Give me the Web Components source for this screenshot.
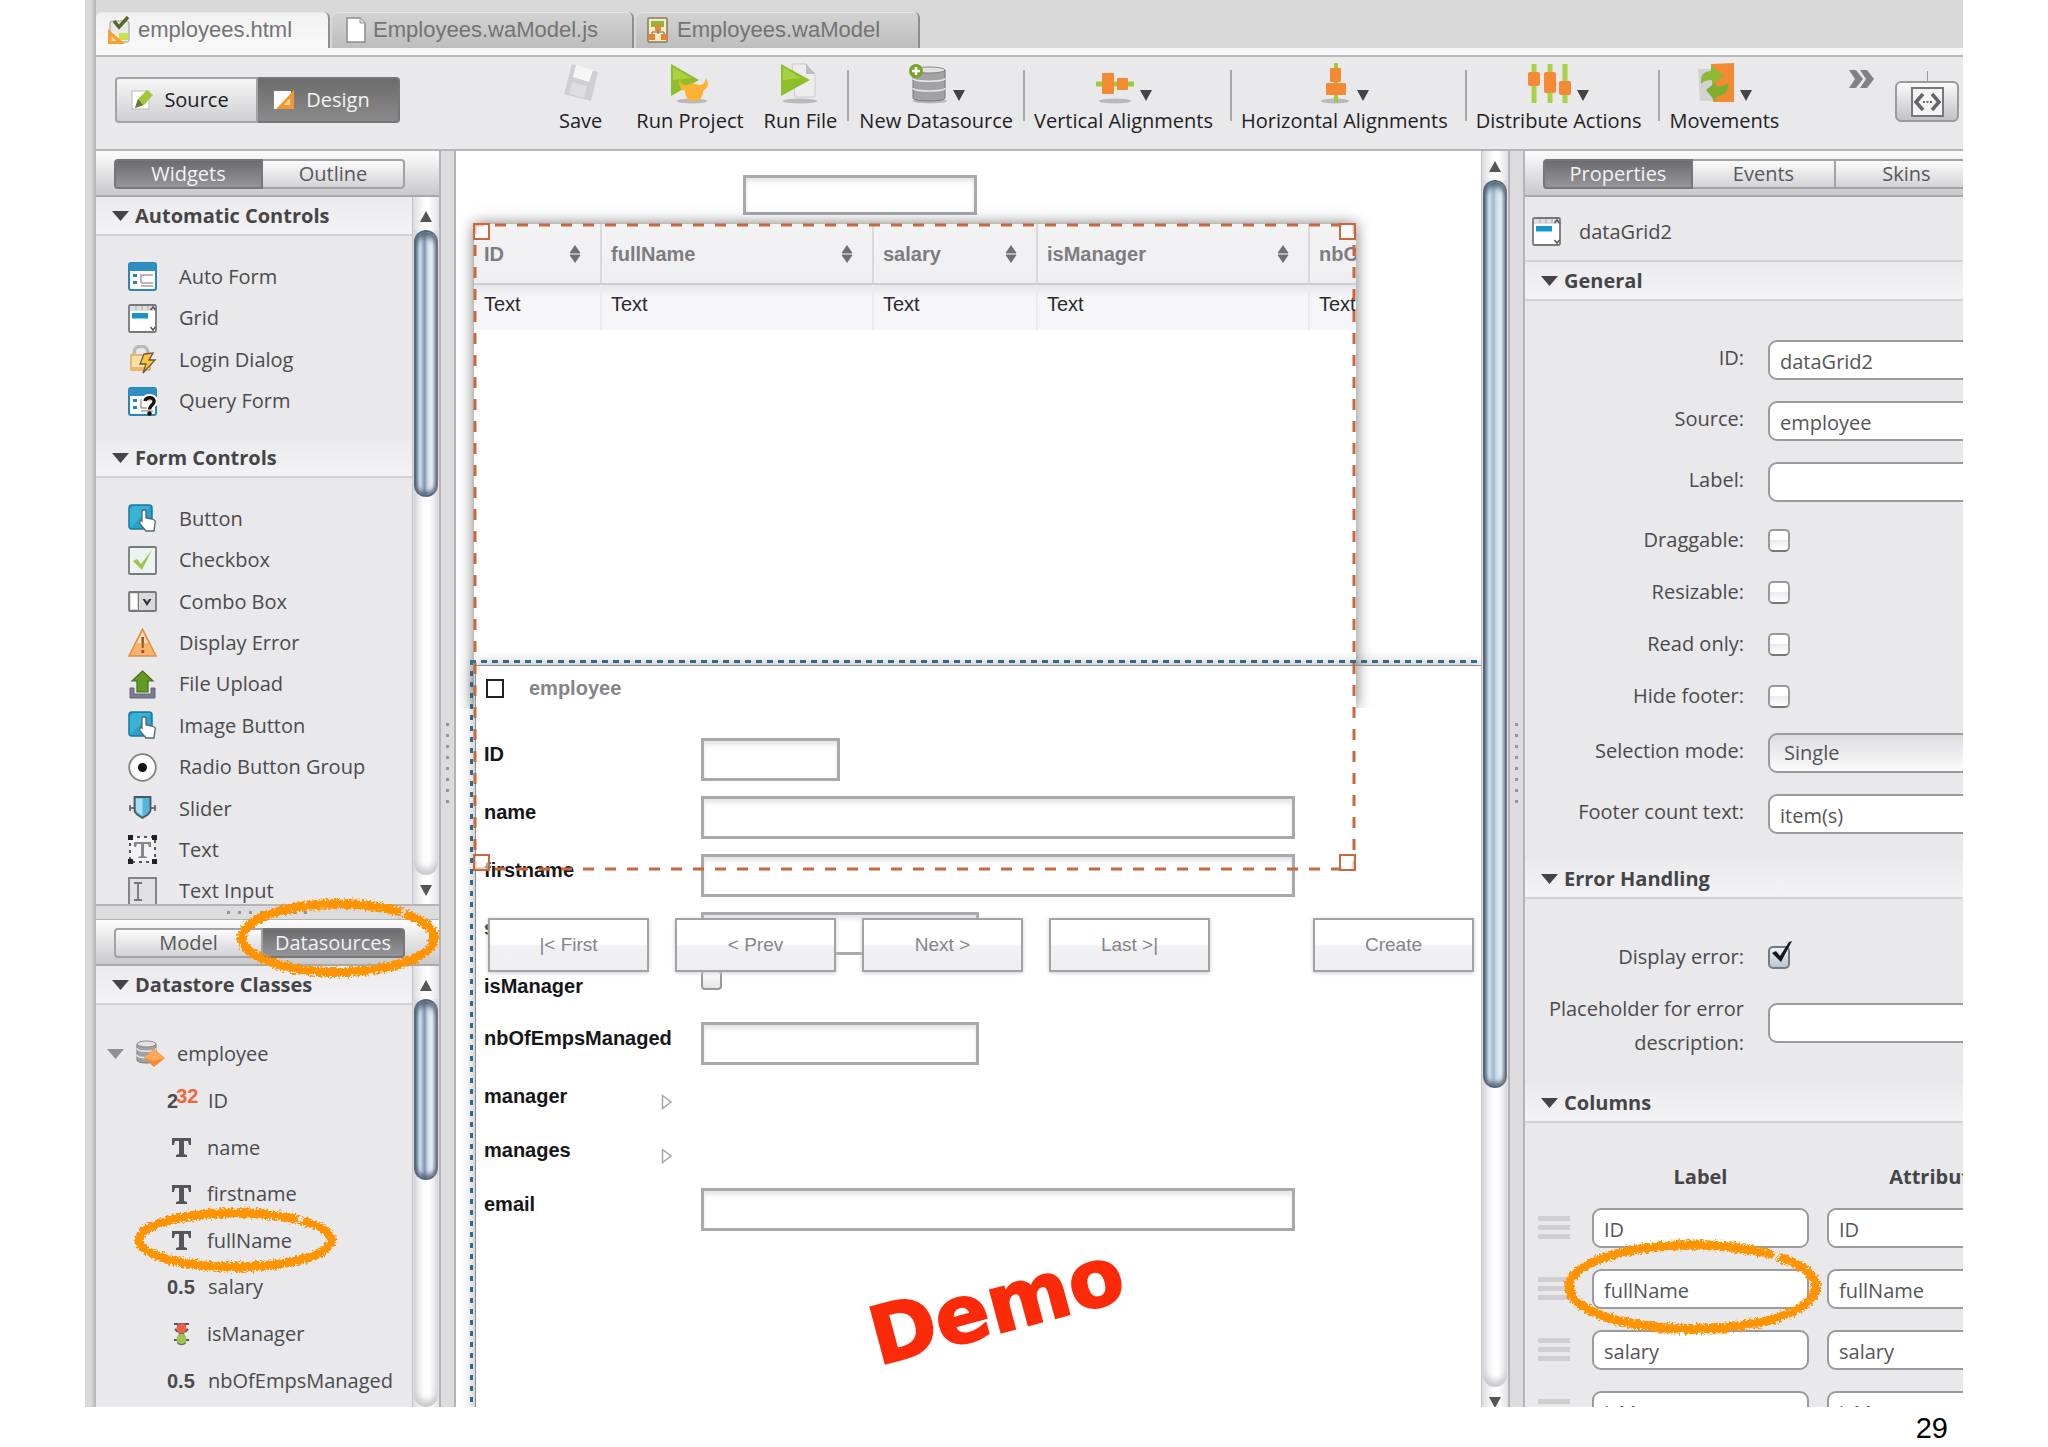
<!DOCTYPE html>
<html lang="en">
<head>
<meta charset="utf-8">
<title>employees.html - Designer</title>
<style>
html,body{margin:0;height:100%;background:#fff}
body{font:20px/26px "Open Sans","Noto Sans",sans-serif;color:#4b4b4e;overflow:hidden}
</style>
</head>
<body>
<slide-page></slide-page>
<script>
const RESET = '*{box-sizing:border-box}button,input,select{font:inherit;color:inherit;margin:0}ul{list-style:none;margin:0;padding:0}';
function define(tag, css, html, setup) {
  customElements.define(tag, class extends HTMLElement {
    constructor() { super(); this.attachShadow({ mode: 'open' }); }
    connectedCallback() {
      if (this.shadowRoot.firstChild) return;
      const body = typeof html === 'function' ? html(this) : html;
      this.shadowRoot.innerHTML = '<style>' + RESET + css + '</style>' + body;
      if (setup) setup(this, this.shadowRoot);
    }
  });
}

const form = '<rect x="1" y="1" width="27" height="27" rx="2" fill="#fff" stroke="#2a86b8" stroke-width="2"/><rect x="1" y="1" width="27" height="8" fill="#2f8fc0"/><path d="M5 12h4v3H5zM5 19h4v3H5z" fill="#2385b5"/><path d="M13 21v-8h12M13 21h12M13 24h12" fill="none" stroke="#b09a9c" stroke-width="1.5"/>';
const press = '<rect x="1" y="1" width="23" height="24" rx="3" fill="#25a3cb" stroke="#17799c" stroke-width="1.5"/><path d="M2 24V5l4-3h17z" fill="#4dbde0" opacity=".55"/><path d="M14 17V8c0-3 4-3 4 0v6l6 1c3 1 4 2 3 4l-1 8h-8l-6-7c-1-3 1-4 2-3z" fill="#fff" stroke="#56646e" stroke-width="1.300"/>';
const db = (x, y, w, h) => `<path d="M${x} ${y + 3}v${h - 6}c0 4 ${w} 4 ${w} 0v-${h - 6}z" fill="#a2a2a4" stroke="#77777a"/><ellipse cx="${x + w / 2}" cy="${y + 3}" rx="${w / 2}" ry="3" fill="#e2e2e4" stroke="#88888b"/><path d="M${x} ${y + h / 3}c0 4 ${w} 4 ${w} 0M${x} ${y + h * .62}c0 4 ${w} 4 ${w} 0" fill="none" stroke="#e8e8ea" stroke-width="1.500"/>`;
const shade = (x, w) => `<ellipse cx="${x}" cy="38" rx="${w}" ry="2.500" fill="#b9b9bd"/>`;
const ICONS = {
  form: [29, 29, form],
  grid: [29, 29, '<rect x="1" y="1" width="27" height="27" rx="1.500" fill="#fff" stroke="#77787c" stroke-width="1.800"/><path d="M2 2h25v5H2z" fill="#dededf"/><path d="M8 2v4M14 2v4M20 2v4" stroke="#aaa"/><path d="M4 9h16v5.500H4z" fill="#1496c6"/><path d="M22.500 6l2.500-3 2.500 3M22.500 23l2.500 3 2.500-3" fill="none" stroke="#555" stroke-width="1.500"/>'],
  login: [29, 29, '<path d="M6 12V8c0-9 14-9 14 0v4" fill="none" stroke="#b9b9bc" stroke-width="3.500"/><rect x="3" y="10" width="19" height="15" fill="#f8dfa6" stroke="#dba960" stroke-width="1.500"/><path d="M3 22h15v4H3z" fill="#f0b562"/><path d="M16 9l9-1-4 7h6L15 28l3-9h-6z" fill="#ffc53c" stroke="#6a5940" stroke-width="1.300"/>'],
  query: [29, 29, form + '<path d="M16 14c1-6 12-5 11 1-.5 3.500-5 3-5.500 8" fill="none" stroke="#fff" stroke-width="6"/><path d="M17 14c1-5 10-4 9 1-.5 3.500-4.500 3-4.500 7.500" fill="none" stroke="#111" stroke-width="3.400"/><circle cx="21.500" cy="26.500" r="2.200" fill="#111"/>'],
  press: [29, 29, press],
  check: [29, 29, '<rect x="1" y="1" width="27" height="27" rx="1" fill="#edf3ee" stroke="#77797d" stroke-width="1.800"/><path d="M5 15l4-2 4 5 11-14-10 20z" fill="#9cc552"/>'],
  combo: [29, 29, '<rect x="1" y="5" width="27" height="19" rx="1" fill="#d9d9db" stroke="#77797d" stroke-width="1.800"/><path d="M3 7h6v15H3z" fill="#fff"/><path d="M10.500 6v17" stroke="#77797d"/><path d="M14.500 12h2.500l2 3 2-3h2.500L19 19z" fill="#333"/>'],
  warn: [29, 29, '<path d="M14.500 1L28 28H1z" fill="#f6b36d" stroke="#e18e45" stroke-width="1.500"/><path d="M14.500 4L9 15h11z" fill="#fde4c8"/><path d="M13.300 9h2.800l-.5 11h-1.800z" fill="#a8501f"/><circle cx="14.700" cy="23.500" r="1.700" fill="#a8501f"/>'],
  upload: [29, 29, '<path d="M2 18v10h25V18h-4v6H6v-6z" fill="#7c7c90" stroke="#66667a"/><path d="M14.500 1L25 11h-5v11H9V11H4z" fill="#629a22" stroke="#44701a" stroke-width="1.200"/>'],
  radio: [29, 29, '<circle cx="14.500" cy="14.500" r="13.300" fill="#fff" stroke="#808285" stroke-width="1.800"/><circle cx="14.500" cy="14.500" r="4.500" fill="#111"/>'],
  slider: [29, 29, '<path d="M1 14h27M2 11v6M27 11v6" stroke="#77707a" stroke-width="2"/><path d="M6.500 3h16v13c0 4-5 6-8 8-3-2-8-4-8-8z" fill="#55b4da" stroke="#4b5860" stroke-width="1.800"/><path d="M8 4.500h6.500V22C12 20 8 18 8 16z" fill="#a8dcf0"/>'],
  text: [29, 29, '<rect x="2" y="2" width="25" height="25" fill="#f4f4f6" stroke="#555" stroke-width="2" stroke-dasharray="3 4"/><path d="M0 0h5v5H0zM24 0h5v5h-5zM0 24h5v5H0zM24 24h5v5h-5z" fill="#222"/><path d="M6 7h17v5h-2l-1-3h-4v12l3 1v1h-9v-1l3-1V9H9l-1 3H6z" fill="#85878f"/>'],
  input: [29, 29, '<rect x="1" y="1" width="27" height="30" fill="#e1e1e4" stroke="#77797d" stroke-width="1.800"/><path d="M6 6h8M10 6v17M6 23h8" stroke="#777" stroke-width="1.800" fill="none"/>'],
  entity: [29, 29, db(1, 1, 19, 22) + '<path d="M18 9l11 9-11 9L8 18z" fill="#f58a34"/><path d="M18 9l11 9-11 3L8 18z" fill="#fba75c"/>'],
  string: [29, 29, '<path d="M5 5h19v7h-2l-1-4h-4v13l3 1v2H9v-2l3-1V8H8l-1 4H5z" fill="#55565a"/>'],
  bool: [29, 29, '<path d="M7 4h15M7 20h15M8 9l3 3M21 9l-3 3" stroke="#555" stroke-width="2"/><path d="M10 3h9v7l-2 4 2 4v5c-2 3-7 3-9 0v-5l2-4-2-4z" fill="#6b6b6b"/><circle cx="14.500" cy="8.500" r="5" fill="#ee5f43"/><circle cx="14.500" cy="19" r="5" fill="#9fc553"/>'],
  html: [24, 29, '<rect x="3" y="5" width="19" height="21" rx="2" fill="#e9e9ea" stroke="#9a9a9c"/><path d="M12 17h9v7h-9z" fill="#c7e14b"/><path d="M7 5l5 6L21 1" fill="none" stroke="#536b22" stroke-width="3.500"/><path d="M1 13v15h17z" fill="#f7a030"/><path d="M4.500 20v5h5z" fill="#ffe1b0"/>'],
  doc: [20, 26, '<path d="M1 1h13l5 5v19H1z" fill="#fff" stroke="#8c8c8e" stroke-width="1.500"/><path d="M14 1v5h5" fill="#ddd" stroke="#999"/>'],
  model: [24, 26, '<rect x="2" y="1" width="19" height="24" rx="1" fill="#f2ecc8" stroke="#8a7a50" stroke-width="1.500"/><path d="M5 4h13v6H5z" fill="#94b53f"/><path d="M9 8h6v6H9z" fill="#e98a32"/><path d="M3 17h6v6H3zM15 17h6v6h-6z" fill="#ef8030"/><path d="M12 13v4M6 17v-2h12v2" stroke="#765" fill="none"/>'],
  source: [24, 24, '<rect x="2" y="3" width="17" height="18" fill="#fff" stroke="#bbb"/><path d="M5 20l3-9 9-9 6 5-9 10z" fill="#a4c639"/><path d="M5 20l3-9 5 6z" fill="#6a7440"/>'],
  design: [24, 24, '<path d="M2 3h17v18H2z" fill="#fff"/><path d="M22 2v19H4z" fill="#f6962f"/><path d="M18 10v7h-6z" fill="#ffd9a4"/>'],
  save: [36, 42, '<path d="M9 1l26 8-7 29L1 31z" fill="#cfcfd1"/><path d="M13 2l17 5-4 12-16-5z" fill="#f6f6f7"/><path d="M9 19l15 4-3 12-15-4z" fill="#dedee0"/>'],
  project: [40, 42, shade(22, 15) + '<path d="M1 1l28 16L1 33z" fill="#8fbe2b"/><path d="M3 4l18 11L3 17z" fill="#a9d144"/><path d="M10 16c0 5 3 6 6 6 5-2 9-2 13 0 4 0 6-2 7-7 4 6 1 11-3 13 0 6-3 10-9 10s-9-4-9-10c-5-2-7-7-5-12z" fill="#fdb234"/>'],
  file: [40, 42, shade(20, 17) + '<path d="M12 1h14l9 10v23H15z" fill="#ededee" stroke="#ccc"/><path d="M26 1l9 10h-9z" fill="#bdbdbf"/><path d="M1 1l29 16L1 33z" fill="#8fbe2b"/><path d="M3 4l18 11L3 17z" fill="#a9d144"/>'],
  datasource: [40, 42, shade(22, 17) + db(5, 4, 32, 34) + '<circle cx="8" cy="8" r="7" fill="#7aa329"/><path d="M8 4v8M4 8h8" stroke="#fff" stroke-width="2.500"/>'],
  valign: [40, 42, shade(20, 16) + '<path d="M1 21h38" stroke="#9dcb3d" stroke-width="5"/><rect x="7" y="10" width="12" height="21" rx="1" fill="#f58a34"/><rect x="22" y="15" width="11" height="12" rx="1" fill="#f58a34"/>'],
  halign: [32, 42, shade(15, 14) + '<path d="M16 0v39" stroke="#9dcb3d" stroke-width="4"/><rect x="10" y="5" width="11" height="14" rx="1" fill="#f58a34"/><rect x="6" y="20" width="20" height="12" rx="1" fill="#f58a34"/>'],
  distribute: [44, 42, '<path d="M6 1v39M22 1v39M37 1v39" stroke="#a9d144" stroke-width="5"/><rect x="0" y="9" width="12" height="14" rx="2" fill="#f58a34"/><rect x="16" y="9" width="12" height="21" rx="2" fill="#f58a34"/><rect x="31" y="18" width="12" height="14" rx="2" fill="#f58a34"/>'],
  movements: [38, 42, '<path d="M1 6h16v32H3z" fill="#d2d2d4"/><path d="M14 1l23-1v39H16z" fill="#f58a34"/><path d="M4 21C3 11 8 8 14 8V2l13 11-12 8v-4c-5 0-8 1-11 4z" fill="#8cba35"/><path d="M9 27l10-8v4c4 1 7 0 12-3 1 9-3 12-12 14v5z" fill="#7fae2e"/>'],
  more: [26, 18, '<path d="M0 0h7l7 9-7 9H0l6-9zM11 0h7l7 9-7 9h-7l6-9z" fill="#828285"/>'],
  code: [33, 30, '<rect x="1" y="1" width="31" height="28" fill="#f4f4f5" stroke="#77777a" stroke-width="2"/><path d="M12 7l-7 8 7 8M21 7l7 8-7 8" fill="none" stroke="#66666a" stroke-width="3.500"/><path d="M12 15h9" stroke="#66666a" stroke-width="2" stroke-dasharray="2 1.500"/>'],
  sort: [12, 18, '<path d="M6 0l5.500 8H.5zM6 18l5.500-8H.5z" fill="#6f6f72"/><path d="M1 9h10" stroke="#a0a0a4" stroke-width="1.500"/>'],
  relation: [12, 16, '<path d="M1.500 1.500L10 8l-8.500 6.500z" fill="#fff" stroke="#a5a5a8" stroke-width="1.500"/>'],
  down: [17, 10, '<path d="M0 0h17L8.500 10z" fill="currentColor"/>'],
  drop: [12, 11, '<path d="M0 0h12L6 11z" fill="#444"/>']
};
define('ui-icon', ':host{display:inline-flex;flex:none}svg{display:block}', el => {
  const [w, h, art] = ICONS[el.getAttribute('name')];
  return `<svg width="${w}" height="${h}" viewBox="0 0 ${w} ${h}" aria-hidden="true">${art}</svg>`;
});

/* Hand-drawn chalk ellipse laid over the content it highlights */
define('mark-ring', ':host{position:absolute;display:block;pointer-events:none;z-index:5}svg{display:block;overflow:visible}', el => {
  const w = +el.getAttribute('w'), h = +el.getAttribute('h'), rx = w / 2 - 6, ry = h / 2 - 6, cx = w / 2, cy = h / 2;
  const pt = (deg, k) => { const a = deg * Math.PI / 180; return (cx + (rx + k) * Math.cos(a)) + ' ' + (cy + (ry + k) * Math.sin(a)); };
  const arc = k => `M${pt(-46, k)}A${rx + k} ${ry + k} 0 1 1 ${pt(-49, k)}`;
  return `<svg width="${w}" height="${h}"><filter id="r" x="-10%" y="-20%" width="120%" height="140%"><feTurbulence type="fractalNoise" baseFrequency=".45" numOctaves="2" seed="4"/><feDisplacementMap in="SourceGraphic" scale="8" xChannelSelector="R" yChannelSelector="G"/></filter><g filter="url(#r)" fill="none" stroke="#ff9300"><path d="${arc(0)}" stroke-width="8"/><path d="${arc(-4)}" stroke-width="2" stroke-dasharray="3 2 7 3"/><path d="${arc(4)}" stroke-width="2" stroke-dasharray="9 3 4 2"/></g></svg>`;
});

define('seg-control', `
:host{display:flex}
button{flex:none;display:flex;align-items:center;justify-content:center;height:30px;padding:0;border:2px solid #a3a2a6;border-left-width:0;background:linear-gradient(#fbfbfb,#d3d2d5);color:#58585b}
button:first-of-type{border-left-width:2px;border-radius:4px 0 0 4px}
button:last-of-type{border-radius:0 4px 4px 0}
button[aria-pressed=true]{background:linear-gradient(#6c6b6e,#969598);color:#f3f3f3;border-color:#77767a}
:host([size=large]) button{height:46px;gap:10px;padding-right:14px;color:#1c1c1e;background:linear-gradient(#f7f7f7,#cfced1)}
:host([size=large]) button[aria-pressed=true]{background:linear-gradient(#6c6c6c,#8a8a8a);color:#f3f3f3}`,
el => el.getAttribute('items').split('|').map((t, i) => {
  const [text, width, icon] = t.split(',');
  return `<button type="button" style="width:${width}px" aria-pressed="${i == el.getAttribute('on')}">${icon ? `<ui-icon name="${icon}"></ui-icon>` : ''}<span>${text}</span></button>`;
}).join(''));

define('tab-strip', ':host{display:flex;flex:none;align-items:flex-start;height:46px;padding:8px 0 0 18px;background:linear-gradient(#fdfdfd,#c9c8cb);border-bottom:2px solid #a9a8ac;overflow:hidden}', '<slot></slot>');

define('section-head', `
:host{display:block;flex:none}
button{display:flex;align-items:center;gap:6px;width:100%;height:39px;padding:0 0 0 16px;border:0;border-bottom:2px solid #d2d1d4;background:linear-gradient(#ebeaec,#f3f2f4);font-weight:700;color:#454548;text-align:left}`,
'<button type="button" aria-expanded="true"><ui-icon name="down"></ui-icon><slot></slot></button>');

define('scroll-bar', `
:host{display:flex;flex-direction:column;flex:none;width:27px;padding:0 1px;background:linear-gradient(90deg,#dcdce0,#fbfbfd 40%,#fff 60%,#e2e2e6);border-left:1px solid #c3c2c6;--a:#8296ac;--b:#d5e1f0}
.arrow{flex:none;height:29px;display:flex;align-items:center;justify-content:center;padding-top:2px}
.track{flex:1;border-radius:0 0 12px 12px;box-shadow:inset 0 -6px 6px #c9c9ce}
.thumb{height:var(--thumb);border-radius:12px;border:2px solid #56697c;border-right-color:#6e747c;background:linear-gradient(90deg,#6d8196,var(--b) 20%,var(--a) 42%,var(--b) 62%,#e5eef8 80%,#8b95a1);box-shadow:inset 0 8px 6px -3px #53677a,inset 0 -6px 5px -3px #53677a}`,
el => '<div class="arrow"><svg width="12" height="11"><path d="M0 11h12L6 0z" fill="#555"/></svg></div><div class="track"><div class="thumb"></div></div>' + (el.hasAttribute('open-end') ? '' : '<div class="arrow"><svg width="12" height="11"><path d="M0 0h12L6 11z" fill="#555"/></svg></div>'));

define('pane-divider', `
:host{display:flex;flex:none;align-items:center;justify-content:center;background:#dcdbdd;border:solid #b4b3b7;border-width:0 2px}
i{background:radial-gradient(circle,#96959a 2px,transparent 2px) 0 0/11px 11px}
:host([dir=v]){width:17px;padding-bottom:32px}
:host([dir=v]) i{width:11px;height:88px}
:host([dir=h]){height:16px;border-width:2px 0 1px}
:host([dir=h]) i{height:11px;width:88px;margin-right:2px}`, '<i></i>');

define('editor-tabs', `
:host{display:flex;flex:none;align-items:flex-end;gap:2px;height:57px;border-bottom:2px solid #b9b8ba;background:linear-gradient(#d9d9d9 48px,#f8f8f8 48px);padding-bottom:7px;font:22px/30px "Liberation Sans",Arial,sans-serif;color:#737375}
a{display:flex;align-items:center;gap:7px;height:36px;padding:0 34px 0 14px;border-radius:6px 6px 0 0;background:linear-gradient(#d3d3d3,#bebebe);border-right:2px solid #8e8e90;color:inherit;text-decoration:none;box-shadow:inset 0 1px #e6e6e6}
a:last-of-type{padding:0 38px 0 10px}
a.on{background:linear-gradient(#f1f1f1,#f8f8f8);padding:0 36px 0 11px}`,
`<a class="on" href="#html"><ui-icon name="html"></ui-icon>employees.html</a><a href="#js"><ui-icon name="doc"></ui-icon>Employees.waModel.js</a><a href="#model"><ui-icon name="model"></ui-icon>Employees.waModel</a>`);

define('tool-button', `
:host{display:block;flex:none}
button{display:flex;flex-direction:column;align-items:center;gap:2px;height:79px;padding:0 10px;border:0;background:none;color:#222225;white-space:nowrap}
:host([wide]) button{padding:0 17px 0 9px}
.art{display:flex;align-items:center;justify-content:center;gap:5px;height:42px}
.art ui-icon+ui-icon{align-self:flex-end;margin-bottom:4px}
span{line-height:28px}`,
el => `<button type="button"><div class="art"><ui-icon name="${el.getAttribute('icon')}"></ui-icon>${el.hasAttribute('menu') ? '<ui-icon name="drop"></ui-icon>' : ''}</div><span><slot></slot></span></button>`);

define('tool-bar', `
:host{display:flex;flex:none;align-items:flex-start;height:94px;padding:6px 4px 0 19px;border-bottom:2px solid #b5b4b7;background:#e9e8ea}
seg-control{margin:14px 149px 0 0}
tool-button:first-of-type{margin-right:14px}
hr{flex:none;width:2px;height:51px;margin:7px 0 0;border:0;background:#a7a6aa}
.more{margin:7px 20px 0 auto;padding:0;border:0;background:none;display:flex}
.code{position:relative;display:flex;align-items:center;justify-content:center;width:64px;height:41px;margin-top:18px;padding:0;border:2px solid #9b9a9e;border-radius:6px;background:linear-gradient(#fafafa,#c2c1c5)}
.code::before{content:"";position:absolute;top:-12px;left:30px;width:1px;height:11px;background:#99989c}`,
`<seg-control size="large" on="1" items="Source,143,source|Design,142,design"></seg-control>
<tool-button icon="save">Save</tool-button><tool-button icon="project">Run Project</tool-button><tool-button icon="file">Run File</tool-button><hr>
<tool-button icon="datasource" menu>New Datasource</tool-button><hr><tool-button icon="valign" menu wide>Vertical Alignments</tool-button><hr>
<tool-button icon="halign" menu wide>Horizontal Alignments</tool-button><hr><tool-button icon="distribute" menu wide>Distribute Actions</tool-button><hr>
<tool-button icon="movements" menu wide>Movements</tool-button>
<button class="more" type="button" aria-label="More"><ui-icon name="more"></ui-icon></button><button class="code" type="button" aria-label="Code view"><ui-icon name="code"></ui-icon></button>`);

define('side-pane', `
:host{display:flex;flex-direction:column;flex:none;width:343px;background:#e9e8ea}
.pane{display:flex;min-height:0}
.top{flex:0 0 707px}.bottom{flex:1}
.list{flex:1;min-width:0;overflow:hidden}
ul{display:flex;flex-direction:column;padding:20px 0 17px 32px}
ul.auto{height:203px}ul.controls{height:451px}
li{flex:1;display:flex;align-items:center;gap:22px}
ul.tree{height:401px;padding:26px 0 2px 11px}
.tree li{gap:11px;padding-left:60px}
.tree li:first-child{padding-left:0;gap:12px}
.tree li:first-child ui-icon:first-child{color:#909093}
.num{display:flex;align-items:center;width:30px;font:bold 20px/26px "Liberation Sans",Arial,sans-serif;color:#4b4b4e}
.num sup{color:#f0683a;font-size:20px;line-height:20px;margin:-2px 0 8px -2px;vertical-align:baseline}
scroll-bar{padding-top:4px}
.strip{position:relative;flex:none}
.ring{position:relative}`,
() => {
  const li = a => a.map(([i, t]) => `<li><ui-icon name="${i}"></ui-icon>${t}</li>`).join('');
  return `<tab-strip><seg-control on="0" items="Widgets,149|Outline,142"></seg-control></tab-strip>
<div class="pane top"><div class="list"><section-head>Automatic Controls</section-head>
<ul class="auto">${li([['form', 'Auto Form'], ['grid', 'Grid'], ['login', 'Login Dialog'], ['query', 'Query Form']])}</ul>
<section-head>Form Controls</section-head>
<ul class="controls">${li([['press', 'Button'], ['check', 'Checkbox'], ['combo', 'Combo Box'], ['warn', 'Display Error'], ['upload', 'File Upload'], ['press', 'Image Button'], ['radio', 'Radio Button Group'], ['slider', 'Slider'], ['text', 'Text'], ['input', 'Text Input']])}</ul></div>
<scroll-bar style="--thumb:267px"></scroll-bar></div>
<pane-divider dir="h"></pane-divider>
<div class="strip"><tab-strip><seg-control on="1" items="Model,149|Datasources,142"></seg-control></tab-strip><mark-ring w="204" h="80" style="left:140px;top:-22px"></mark-ring></div>
<div class="pane bottom"><div class="list"><section-head>Datastore Classes</section-head>
<ul class="tree"><li><ui-icon name="down"></ui-icon><ui-icon name="entity"></ui-icon>employee</li>
<li><span class="num">2<sup>32</sup></span>ID</li>${li([['string', 'name'], ['string', 'firstname']])}
<li class="ring"><ui-icon name="string"></ui-icon>fullName<mark-ring w="204" h="66" style="left:26px;top:-11px"></mark-ring></li>
<li><span class="num">0.5</span>salary</li>${li([['bool', 'isManager']])}<li><span class="num">0.5</span>nbOfEmpsManaged</li></ul></div>
<scroll-bar open-end style="--thumb:181px"></scroll-bar></div>`;
});

const CANVAS_INPUT = 'input[type=text]{height:43px;border:3px solid #a9a8ac;background:#fff;padding:0 6px;box-shadow:inset 0 4px 4px #e6e6e8}';
define('data-grid', `
:host{display:block;overflow:hidden;background:#fff}
table{width:1108px;table-layout:fixed;border-collapse:collapse}
th,td{padding:0 19px 0 9px;text-align:left;font-size:20px;border-left:2px solid #d9d8dc}
th:first-child,td:first-child{border-left:0;padding-left:10px}
th{height:60px;background:linear-gradient(#f3f3f4,#efeef1);color:#7d7d80;border-bottom:2px solid #cfced2}
th>div{display:flex;justify-content:space-between;align-items:center}
td{height:46px;padding-bottom:8px;background:linear-gradient(#e6e5e9,#f6f5f8 12px);color:#2a2a2c;border-color:#ecebef}`,
`<table><colgroup><col style="width:127px"><col style="width:272px"><col style="width:164px"><col style="width:272px"><col></colgroup><thead><tr>${['ID', 'fullName', 'salary', 'isManager', 'nbOfEmpsManaged'].map(t => `<th scope="col"><div>${t}<ui-icon name="sort"></ui-icon></div></th>`).join('')}</tr></thead><tbody><tr>${'<td>Text</td>'.repeat(5)}</tr></tbody></table>`);

define('employee-form', `
:host{display:block;background:repeating-linear-gradient(90deg,#33769c 0 6px,transparent 6px 11px) 0 0/100% 3px no-repeat,repeating-linear-gradient(#33769c 0 5px,transparent 5px 11px) 0 0/3px 100% no-repeat;padding:5px 0 0 5px}
.in{height:100%;padding:0 0 0 8px;border:solid #8f8f92;border-width:1px 0 0 1px;box-shadow:0 0 14px rgba(0,0,0,.32)}
header{display:flex;align-items:center;gap:25px;height:44px;margin-bottom:28px;padding-left:2px;font-weight:700;color:#858588}
header input{appearance:none;width:18px;height:19px;margin:0;border:2px solid #222;background:#fff}
.row{display:flex;align-items:flex-start;height:43px;margin-bottom:15px;color:#161618}
.row label,.row b{width:217px;line-height:32px;font-weight:700;white-space:nowrap}
.row b{width:177px}
.row ui-icon{margin-top:14px}
.row.box{height:37px}.row.rel{height:39px}
.s{width:139px}.m{width:278px}.l{width:594px}
.box input{appearance:none;width:21px;height:20px;border:2px solid #99989c;border-radius:4px;background:linear-gradient(#fff,#e6e6e8)}` + CANVAS_INPUT,
() => {
  const f = (t, c) => `<div class="row"><label for="${t}">${t}</label><input id="${t}" class="${c}" type="text"></div>`;
  return `<div class="in"><header><input id="e" type="checkbox"><label for="e">employee</label></header>${f('ID', 's')}${f('name', 'l')}${f('firstname', 'l')}${f('salary', 'm')}
<div class="row box"><label for="im">isManager</label><input id="im" type="checkbox"></div>${f('nbOfEmpsManaged', 'm')}
<div class="row rel"><b>manager</b><ui-icon name="relation"></ui-icon></div><div class="row rel"><b>manages</b><ui-icon name="relation"></ui-icon></div>${f('email', 'l')}</div>`;
});

define('selection-box', `
:host{display:block;pointer-events:none}
svg{display:block;width:100%;height:100%}
.d{stroke:#c9683f;stroke-width:3;stroke-dasharray:11 11}
.h{fill:#fff;fill-opacity:.6;stroke:#c9683f;stroke-width:2}`,
`<svg></svg>`,
(el, root) => {
  const svg = root.querySelector('svg'), w = el.clientWidth, h = el.clientHeight;
  svg.innerHTML = `<path class="d" d="M0 2H${w}M0 ${h - 2}H${w}M2 0V${h}M${w - 2} 0V${h}"/><path class="h" d="M1 1h15v15H1zM${w - 16} 1h15v15h-15zM1 ${h - 16}h15v15H1zM${w - 16} ${h - 16}h15v15h-15z"/>`;
});

define('design-canvas', `
:host{display:flex;flex:1;min-width:0;background:#fff;font:20px/26px "Liberation Sans",Arial,sans-serif}
.stage{position:relative;flex:1;min-width:0;overflow:hidden}
.stage>*{position:absolute}
data-grid{left:18px;top:73px;width:882px;height:484px}
.shadow{left:18px;top:73px;width:882px;height:484px;box-shadow:0 0 14px rgba(0,0,0,.55);clip-path:inset(-20px -20px 0 -20px)}
employee-form{left:14px;top:509px;right:0;bottom:-20px}
selection-box{left:17px;top:72px;width:883px;height:648px}
.nav{left:32px;top:767px;display:flex;gap:26px}
.nav button{width:161px;height:54px;padding:0;border:2px solid #a3a2a6;background:linear-gradient(#fff 48%,#f1f0f3 52%,#eeedf0);color:#858588;font-size:19px;box-shadow:0 1px 4px #ccc}
.nav button:last-child{margin-left:77px}
.demo{left:411px;top:1100px;font:bold 80px/110px "DejaVu Sans",sans-serif;color:#fb2a08;-webkit-text-stroke:2px #fb2a08;transform:rotate(-15deg)}
scroll-bar{--a:#a5b8ca;--b:#d3e2ec;margin-bottom:-9px}` + CANVAS_INPUT + `
input.search[type=text]{left:287px;top:24px;width:234px;height:40px}`,
`<div class="stage"><input class="search" type="text" aria-label="Search"><div class="shadow"></div><data-grid></data-grid><employee-form></employee-form><selection-box></selection-box>
<div class="nav">${['|&lt; First', '&lt; Prev', 'Next &gt;', 'Last &gt;|', 'Create'].map(t => `<button type="button">${t}</button>`).join('')}</div>
<div class="demo">Demo</div></div><scroll-bar style="--thumb:908px"></scroll-bar>`);

const FIELD = 'input[type=text],select{height:40px;border:2px solid #9b9a9e;border-radius:9px;background:#fff;padding:3px 10px 0;color:#555558}';
define('prop-row', FIELD + `
:host{display:flex;align-items:center;gap:24px;height:61px}
:host([kind=check]){height:52px}
:host([tall]){height:80px}
label{width:219px;text-align:right;flex:none;padding-bottom:3px}
:host([kind=check]) label{padding:0}
:host([tall]) label{line-height:34px;padding:6px 0 0 16px}
input[type=text],select{width:277px}
select{appearance:none;background:linear-gradient(#dddce0,#fbfbfb);padding:0 14px}
input[type=checkbox]{appearance:none;width:22px;height:23px;border:2px solid #99989c;border-bottom-color:#77767a;border-radius:5px;background:linear-gradient(#fff 45%,#ececee 50%,#fff)}
input[type=checkbox]:checked{background:linear-gradient(#eef0f3,#b9c6d2);border-color:#77787e}
span{position:relative;display:flex}
svg{position:absolute;left:2px;top:-5px;pointer-events:none}`,
el => {
  const k = el.getAttribute('kind'), v = el.getAttribute('value') || '';
  return `<label for="f">${el.getAttribute('label')}</label>` + (k === 'check'
    ? `<span><input id="f" type="checkbox" ${v ? 'checked' : ''}>${v ? '<svg width="24" height="24"><path d="M2 12l4-2 4 5L19 1l3-1L11 21z" fill="#16181c"/></svg>' : ''}</span>`
    : k === 'select' ? `<select id="f"><option>${v}</option></select>` : `<input id="f" type="text" value="${v}">`);
});

define('property-panel', FIELD + `
:host{display:block;flex:none;width:438px;overflow:hidden;background:#e9e8ea}
.title{display:flex;align-items:center;gap:18px;height:65px;padding:6px 0 0 7px;border-bottom:2px solid #d2d1d4}
.wide{width:560px}
.general{padding:28px 0 16px}
.checks{padding-top:2px}
.errors{padding:32px 0 21px}
.columns{position:relative}
table{border-collapse:collapse}
th{height:74px;padding:34px 18px 0 0;color:#454548;width:235px}
th:first-child{width:67px}
td{height:61px;padding:0 18px 0 0}
td:first-child{padding-left:13px}
td input[type=text]{width:217px;display:block}
i{display:block;width:32px;height:24px;background:linear-gradient(#cfced1 5px,transparent 5px) 0 0/100% 9px}`,
`<div class="wide"><tab-strip><seg-control on="0" items="Properties,150|Events,143|Skins,143"></seg-control></tab-strip>
<div class="title"><ui-icon name="grid"></ui-icon>dataGrid2</div>
<section-head>General</section-head>
<div class="general"><prop-row label="ID:" value="dataGrid2"></prop-row><prop-row label="Source:" value="employee"></prop-row><prop-row label="Label:"></prop-row>
<div class="checks"><prop-row kind="check" label="Draggable:"></prop-row><prop-row kind="check" label="Resizable:"></prop-row><prop-row kind="check" label="Read only:"></prop-row><prop-row kind="check" label="Hide footer:"></prop-row></div>
<prop-row kind="select" label="Selection mode:" value="Single"></prop-row><prop-row label="Footer count text:" value="item(s)"></prop-row></div>
<section-head>Error Handling</section-head>
<div class="errors"><prop-row kind="check" label="Display error:" value="on"></prop-row><prop-row tall label="Placeholder for error description:"></prop-row></div>
<section-head>Columns</section-head>
<div class="columns"><table><thead><tr><th></th><th scope="col">Label</th><th scope="col">Attribute</th></tr></thead><tbody>${['ID', 'fullName', 'salary', 'isManager'].map(t => `<tr><td><i></i></td><td><input type="text" aria-label="Label" value="${t}"></td><td><input type="text" aria-label="Attribute" value="${t}"></td></tr>`).join('')}</tbody></table>
<mark-ring w="259" h="96" style="left:38px;top:116px"></mark-ring></div></div>`);

define('slide-page', `
:host{display:flex;flex-direction:column;height:100vh;padding:0 85px;background:#fff}
main{display:flex;flex-direction:column;flex:1;min-height:0;padding-left:11px;background:linear-gradient(90deg,#d9d9d9 6px,#b3b3b5 11px);overflow:hidden}
.work{display:flex;flex:1;min-height:0;overflow:hidden}
footer{flex:none;height:40px;padding-right:15px;text-align:right;font:29px/42px "Liberation Sans",Arial,sans-serif;color:#000}`,
`<main><editor-tabs></editor-tabs><tool-bar></tool-bar><div class="work"><side-pane></side-pane><pane-divider dir="v"></pane-divider><design-canvas></design-canvas><pane-divider dir="v"></pane-divider><property-panel></property-panel></div></main><footer>29</footer>`);
</script>
</body>
</html>
